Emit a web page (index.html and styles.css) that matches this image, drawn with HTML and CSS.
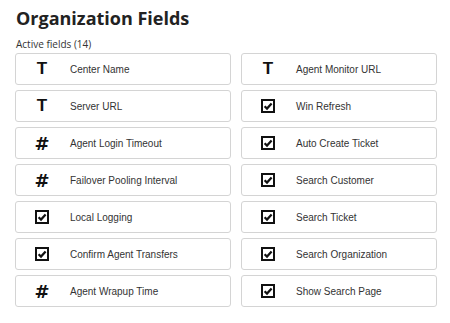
FILE: index.html
```html
<!DOCTYPE html>
<html lang="en">
<head>
    <meta charset="UTF-8">
    <meta name="viewport" content="width=device-width, initial-scale=1.0">
    <title>Organization Fields</title>
    <link rel="stylesheet" href="styles.css">
</head>
<body>

<div class="page">
    <h1 class="title">Organization Fields</h1>
    <div class="subtitle">Active fields (14)</div>

    <div class="fields">
        <div class="field"><span class="icon text-icon">T</span><span class="label">Center Name</span></div>
        <div class="field"><span class="icon text-icon">T</span><span class="label">Agent Monitor URL</span></div>

        <div class="field"><span class="icon text-icon">T</span><span class="label">Server URL</span></div>
        <div class="field"><span class="icon"><svg class="check" viewBox="0 0 14 14"><rect x="1" y="1" width="12" height="12" fill="#fff" stroke="#111" stroke-width="2"/><path d="M3.6 7.2 L6 9.6 L10.6 4.4" fill="none" stroke="#111" stroke-width="2.2"/></svg></span><span class="label">Win Refresh</span></div>

        <div class="field"><span class="icon num-icon">#</span><span class="label">Agent Login Timeout</span></div>
        <div class="field"><span class="icon"><svg class="check" viewBox="0 0 14 14"><rect x="1" y="1" width="12" height="12" fill="#fff" stroke="#111" stroke-width="2"/><path d="M3.6 7.2 L6 9.6 L10.6 4.4" fill="none" stroke="#111" stroke-width="2.2"/></svg></span><span class="label">Auto Create Ticket</span></div>

        <div class="field"><span class="icon num-icon">#</span><span class="label">Failover Pooling Interval</span></div>
        <div class="field"><span class="icon"><svg class="check" viewBox="0 0 14 14"><rect x="1" y="1" width="12" height="12" fill="#fff" stroke="#111" stroke-width="2"/><path d="M3.6 7.2 L6 9.6 L10.6 4.4" fill="none" stroke="#111" stroke-width="2.2"/></svg></span><span class="label">Search Customer</span></div>

        <div class="field"><span class="icon"><svg class="check" viewBox="0 0 14 14"><rect x="1" y="1" width="12" height="12" fill="#fff" stroke="#111" stroke-width="2"/><path d="M3.6 7.2 L6 9.6 L10.6 4.4" fill="none" stroke="#111" stroke-width="2.2"/></svg></span><span class="label">Local Logging</span></div>
        <div class="field"><span class="icon"><svg class="check" viewBox="0 0 14 14"><rect x="1" y="1" width="12" height="12" fill="#fff" stroke="#111" stroke-width="2"/><path d="M3.6 7.2 L6 9.6 L10.6 4.4" fill="none" stroke="#111" stroke-width="2.2"/></svg></span><span class="label">Search Ticket</span></div>

        <div class="field"><span class="icon"><svg class="check" viewBox="0 0 14 14"><rect x="1" y="1" width="12" height="12" fill="#fff" stroke="#111" stroke-width="2"/><path d="M3.6 7.2 L6 9.6 L10.6 4.4" fill="none" stroke="#111" stroke-width="2.2"/></svg></span><span class="label">Confirm Agent Transfers</span></div>
        <div class="field"><span class="icon"><svg class="check" viewBox="0 0 14 14"><rect x="1" y="1" width="12" height="12" fill="#fff" stroke="#111" stroke-width="2"/><path d="M3.6 7.2 L6 9.6 L10.6 4.4" fill="none" stroke="#111" stroke-width="2.2"/></svg></span><span class="label">Search Organization</span></div>

        <div class="field"><span class="icon num-icon">#</span><span class="label">Agent Wrapup Time</span></div>
        <div class="field"><span class="icon"><svg class="check" viewBox="0 0 14 14"><rect x="1" y="1" width="12" height="12" fill="#fff" stroke="#111" stroke-width="2"/><path d="M3.6 7.2 L6 9.6 L10.6 4.4" fill="none" stroke="#111" stroke-width="2.2"/></svg></span><span class="label">Show Search Page</span></div>
    </div>
</div>

</body>
</html>
```

FILE: styles.css
```css
body {
    margin: 0;
    background: #fff;
    font-family: "Liberation Sans", Arial, sans-serif;
    color: #333;
}
.page {
    padding: 6px 0 0 15px;
}
.title {
    margin: 0 0 0 1px;
    font-family: "Open Sans", sans-serif;
    font-size: 18px;
    font-weight: bold;
    line-height: 24px;
    color: #222;
}
.subtitle {
    margin: 7px 0 2px 1px;
    font-family: "Open Sans", sans-serif;
    font-size: 10px;
    line-height: 14px;
    color: #333;
}
.fields {
    display: grid;
    grid-template-columns: 216px 196px;
    column-gap: 10px;
    row-gap: 5px;
}
.field {
    display: flex;
    align-items: center;
    height: 32px;
    box-sizing: border-box;
    border: 1px solid #d4d4d4;
    border-radius: 3px;
    background: #fff;
}
.icon {
    width: 24px;
    margin-left: 14px;
    margin-right: 16px;
    display: flex;
    justify-content: center;
    align-items: center;
    color: #111;
    font-weight: bold;
}
.text-icon {
    font-size: 17px;
}
.num-icon {
    font-size: 18px;
    font-family: "DejaVu Sans", sans-serif;
}
.check {
    width: 14px;
    height: 14px;
}
.label {
    font-size: 10px;
    color: #333;
}
```
